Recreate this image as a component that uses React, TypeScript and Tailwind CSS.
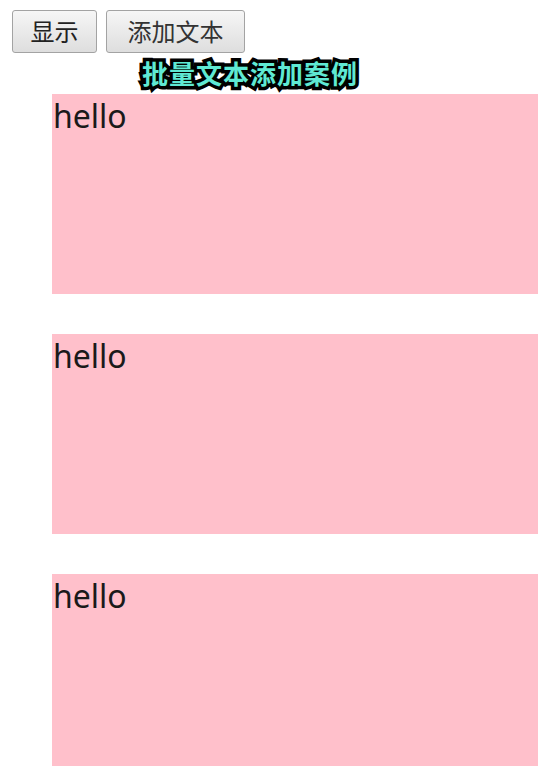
import React from "react";

const App: React.FC = () => {
  const items = ["hello", "hello", "hello"];
  return (
    <div className="min-h-[766px] w-[538px] overflow-hidden bg-white font-['Noto_Sans','Noto_Sans_CJK_SC',sans-serif]">
      <div className="flex gap-[9px] pl-[12px] pt-[10px]">
        <button className="h-[43px] w-[85px] rounded-[3px] border border-[#a3a3a3] bg-gradient-to-b from-[#f6f6f6] to-[#dedede] text-[24px] leading-none text-[#222]">
          显示
        </button>
        <button className="h-[43px] w-[139px] rounded-[3px] border border-[#a3a3a3] bg-gradient-to-b from-[#f6f6f6] to-[#dedede] text-[24px] leading-none text-[#333]">
          添加文本
        </button>
      </div>
      <div className="flex h-[41px] items-center pl-[142px]">
        <span className="text-[26px] font-bold leading-none tracking-[1px] text-[#5fe9d3] [-webkit-text-stroke:7px_#000] [paint-order:stroke_fill]">
          批量文本添加案例
        </span>
      </div>
      <div className="flex flex-col gap-[40px] pl-[52px]">
        {items.map((t, i) => (
          <div key={i} className="h-[200px] bg-[#ffc0cb] pl-[1px] pt-[2px] text-[32px] leading-[40px] text-[#1a1a1a]">
            {t}
          </div>
        ))}
      </div>
    </div>
  );
};

export default App;
